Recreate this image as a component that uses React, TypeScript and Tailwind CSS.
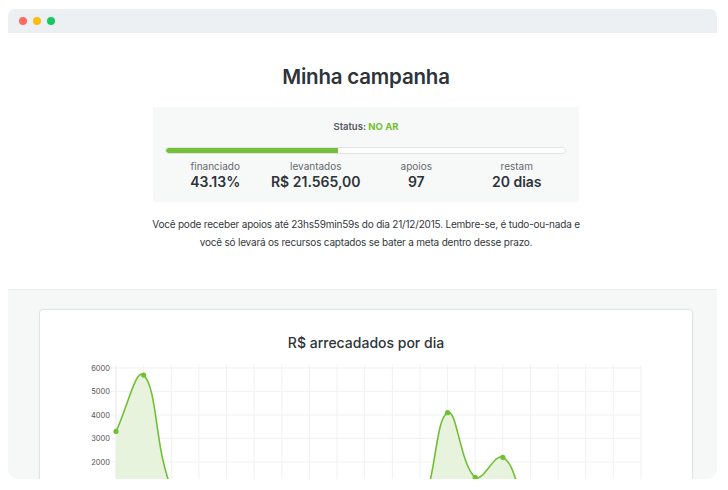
import React from "react";

type P = { x: number; y: number };

const X0 = 76;
const STEP = (601 - 76) / 19;
const YT = 10;
const PER = 23.5;
const vy = (v: number) => YT + ((6000 - v) * PER) / 1000;

const data = [3300, 5700, 900, 0, 0, 0, 0, 0, 0, 0, 0, 0, 4100, 1350, 2200, 0, 0, 0, 0, 0];

function buildPath(pts: P[], t = 0.4) {
  const cps = pts.map((cur, i) => {
    const prev = pts[i - 1] || cur;
    const next = pts[i + 1] || cur;
    const d01 = Math.hypot(cur.x - prev.x, cur.y - prev.y);
    const d12 = Math.hypot(next.x - cur.x, next.y - cur.y);
    const sum = d01 + d12 || 1;
    const fa = (t * d01) / sum;
    const fb = (t * d12) / sum;
    return {
      p: { x: cur.x - fa * (next.x - prev.x), y: cur.y - fa * (next.y - prev.y) },
      n: { x: cur.x + fb * (next.x - prev.x), y: cur.y + fb * (next.y - prev.y) },
    };
  });
  let d = `M${pts[0].x},${pts[0].y}`;
  for (let i = 1; i < pts.length; i++) {
    const a = cps[i - 1].n;
    const b = cps[i].p;
    d += ` C${a.x},${a.y} ${b.x},${b.y} ${pts[i].x},${pts[i].y}`;
  }
  return d;
}

function Chart() {
  const pts = data.map((v, i) => ({ x: X0 + i * STEP, y: vy(v) }));
  const line = buildPath(pts);
  const bottom = vy(0);
  const area = `${line} L${pts[pts.length - 1].x},${bottom} L${pts[0].x},${bottom} Z`;
  const gridVals = [6000, 5000, 4000, 3000, 2000, 1000, 0];
  const labelVals = [6000, 5000, 4000, 3000, 2000];
  return (
    <svg width="651" height="160" className="block">
      {gridVals.map((v) => (
        <line key={v} x1={X0 - 5} x2={601} y1={vy(v)} y2={vy(v)} stroke="#f0f1f1" strokeWidth="1" />
      ))}
      {labelVals.map((v) => (
        <text
          key={v}
          x={70}
          y={vy(v) + 2.6}
          textAnchor="end"
          fontSize="7.5"
          fill="#555"
          fontFamily="Inter, sans-serif"
        >
          {v}
        </text>
      ))}
      {data.map((_, i) => (
        <line
          key={i}
          x1={X0 + i * STEP}
          x2={X0 + i * STEP}
          y1={YT - 3}
          y2={bottom}
          stroke={i === 0 ? "#e8e9e9" : "#f0f1f1"}
          strokeWidth="1"
        />
      ))}
      <path d={area} fill="#e4f2d8" opacity="0.9" />
      <path d={line} fill="none" stroke="#71bf35" strokeWidth="1.6" />
      {pts.map((p, i) =>
        data[i] > 0 ? <circle key={i} cx={p.x} cy={p.y} r="2.6" fill="#71bf35" /> : null
      )}
    </svg>
  );
}

function Stat({ label, value }: { label: string; value: string }) {
  return (
    <div className="flex flex-col items-center">
      <div className="text-[10px] leading-[13px] text-[#666b70]">{label}</div>
      <div className="text-[14px] leading-[18px] font-semibold text-[#2e3439]">{value}</div>
    </div>
  );
}

export default function App() {
  return (
    <div
      className="w-[728px] h-[490px] bg-white overflow-hidden pt-[9px] pl-[8px]"
      style={{ fontFamily: "Inter, 'Noto Sans', sans-serif" }}
    >
      <div className="w-[709px] h-[470px] rounded-t-[7px] rounded-b-[10px] overflow-hidden flex flex-col">
        <div className="h-[24px] bg-[#edf0f3] flex items-center pl-[11px] gap-[6px] shrink-0">
          <span className="w-[8px] h-[8px] rounded-full bg-[#fe6a5e]" />
          <span className="w-[8px] h-[8px] rounded-full bg-[#fdbb0b]" />
          <span className="w-[8px] h-[8px] rounded-full bg-[#19c863]" />
        </div>
        <div className="h-[256px] shrink-0 bg-white flex flex-col items-center pl-[7px]">
          <h1 className="mt-[30px] text-[20.5px] leading-[28px] font-semibold text-[#2e3439] tracking-[-0.2px]">
            Minha campanha
          </h1>
          <div className="mt-[16px] w-[426px] h-[95px] bg-[#f7f8f8] px-[12px] pt-[13px] flex flex-col">
            <div className="text-center text-[9.5px] leading-[14px] font-semibold text-[#555a5e]">
              Status: <span className="text-[#72bf35] font-bold">NO AR</span>
            </div>
            <div className="mt-[13px] h-[7px] w-[401px] rounded-full bg-white border border-[#e2e4e4] overflow-hidden">
              <div className="h-full w-[43%] bg-[#74c03a] rounded-l-full" />
            </div>
            <div className="mt-[6px] grid grid-cols-4">
              <Stat label="financiado" value="43.13%" />
              <Stat label="levantados" value="R$ 21.565,00" />
              <Stat label="apoios" value="97" />
              <Stat label="restam" value="20 dias" />
            </div>
          </div>
          <p className="mt-[13px] text-center text-[10px] leading-[18px] tracking-[-0.2px] text-[#33383c]">
            Você pode receber apoios até 23hs59min59s do dia 21/12/2015. Lembre-se, é tudo-ou-nada e
            <br />
            você só levará os recursos captados se bater a meta dentro desse prazo.
          </p>
        </div>
        <div className="flex-1 bg-[#f6f7f7] border-t border-[#eaecec] pt-[19px] pl-[31px] pr-[24px] flex flex-col">
          <div className="flex-1 bg-white border border-[#e1e3e3] rounded-[4px] shadow-[0_0_2px_rgba(0,0,0,0.04)] flex flex-col overflow-hidden">
            <div className="pt-[23px] text-center text-[14px] leading-[20px] font-medium text-[#2e3439]">
              R$ arrecadados por dia
            </div>
            <div className="mt-[5px]">
              <Chart />
            </div>
          </div>
        </div>
      </div>
    </div>
  );
}
